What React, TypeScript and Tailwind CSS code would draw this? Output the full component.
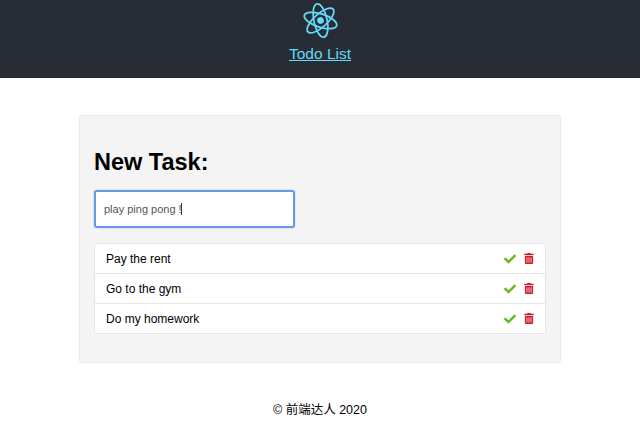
import React, { useState } from "react";
import { FaCheck, FaTrashAlt } from "react-icons/fa";

const initialTodos = ["Pay the rent", "Go to the gym", "Do my homework"];

function ReactLogo() {
  return (
    <svg viewBox="-12 -12 24 24" className="w-[37px] h-[37px] text-[#61dafb]" fill="none" stroke="currentColor" strokeWidth="1.15">
      <g transform="rotate(-12)">
        <circle r="2.2" fill="currentColor" stroke="none" />
        <ellipse rx="11" ry="4.3" transform="rotate(30)" />
        <ellipse rx="11" ry="4.3" transform="rotate(90)" />
        <ellipse rx="11" ry="4.3" transform="rotate(150)" />
      </g>
    </svg>
  );
}

export default function App() {
  const [todos] = useState(initialTodos);

  return (
    <div className="font-['Liberation_Sans','Noto_Sans_CJK_SC',sans-serif] bg-white min-h-[431px] text-black">
      <header className="bg-[#282c34] h-[78px] flex flex-col items-center pt-[2px]">
        <ReactLogo />
        <a href="#" className="text-[#61dafb] underline text-[15.5px] leading-[20px] mt-[5px]">
          Todo List
        </a>
      </header>

      <main className="mx-auto w-[482px] mt-[37px] bg-[#f4f4f4] border border-[#e8e8e8] rounded-[3px] px-[14px] pt-[32px] pb-[28px]">
        <h1 className="text-[23.5px] leading-[29px] font-bold">New Task:</h1>
        <div className="relative w-[201px] mt-[13px]">
          <input
            type="text"
            defaultValue="play ping pong !"
            className="block w-full h-[38px] px-[8px] bg-white border-[2px] border-[#649ae6] rounded-[3px] shadow-[0_0_2px_#9dbff0] text-[11px] text-[#555] outline-none"
          />
          <span className="absolute left-[87px] top-[13px] w-px h-[12px] bg-[#333]" />
        </div>
        <ul className="mt-[15px] bg-white border border-[#e6e6e6] rounded-[2px]">
          {todos.map((todo, i) => (
            <li
              key={todo}
              className={`flex items-center justify-between pl-[11px] pr-[11px] text-[12px] ${i > 0 ? "h-[30px] border-t border-[#e6e6e6]" : "h-[29px]"}`}
            >
              <span>{todo}</span>
              <span className="flex items-center gap-[8px]">
                <FaCheck className="w-[12px] h-[12px] text-[#69b91e]" />
                <FaTrashAlt className="w-[10px] h-[11px] text-[#d0202e]" />
              </span>
            </li>
          ))}
        </ul>
      </main>

      <footer className="text-center text-[12.5px] leading-[16px] mt-[39px]">© 前端达人 2020</footer>
    </div>
  );
}
